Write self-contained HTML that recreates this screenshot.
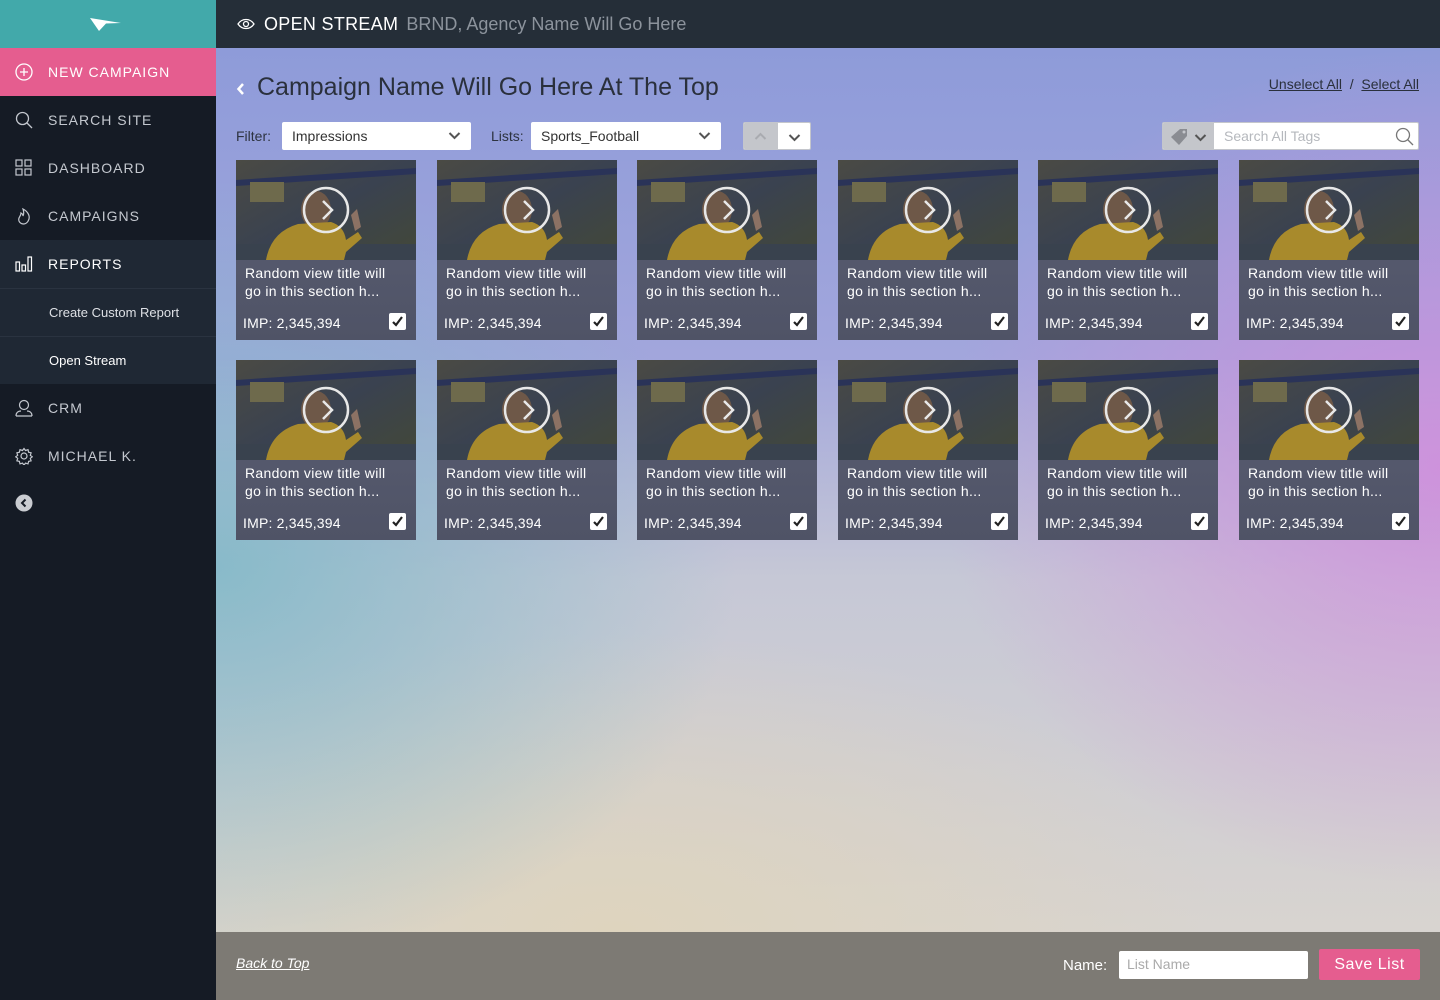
<!DOCTYPE html>
<html><head><meta charset="utf-8">
<style>
*{margin:0;padding:0;box-sizing:border-box}
body{width:1440px;height:1000px;overflow:hidden;font-family:"Liberation Sans",sans-serif;position:relative;background:#151b25}
.side{position:absolute;left:0;top:0;width:216px;height:1000px;background:#151b25}
.logo{height:48px;background:#42a9aa;position:relative}
.nav{height:48px;display:flex;align-items:center;color:#c4c8cf;font-size:14px;letter-spacing:1px;position:relative}
.nav svg{position:absolute;left:15px}
.nav span{position:absolute;left:48px}
.newc{background:#e55d8f;color:#fff}
.rep{background:#1f2834;color:#fff}
.sub{height:48px;background:#1f2834;border-top:1px solid #2a3340;color:#dde0e5;font-size:13px;padding-left:49px;display:flex;align-items:center}
.top{position:absolute;left:216px;top:0;width:1224px;height:48px;background:#252e38;color:#fff;font-size:18px;display:flex;align-items:center}
.main{position:absolute;left:216px;top:48px;width:1224px;height:884px;
background:
radial-gradient(ellipse 500px 420px at 1224px 420px,rgba(210,140,220,.85),rgba(210,140,220,0)),
radial-gradient(ellipse 520px 400px at 0px 520px,rgba(130,185,200,.9),rgba(130,185,200,0)),
radial-gradient(ellipse 600px 300px at 400px 884px,rgba(222,212,190,1),rgba(222,212,190,0)),
linear-gradient(180deg,#8e9bd9 0%,#a2a6dc 35%,#c6c8d6 60%,#d8d4d0 100%)}
.foot{position:absolute;left:216px;top:932px;width:1224px;height:68px;background:#7d7a74}
.card{position:absolute;width:180px;height:180px;background:linear-gradient(180deg,#5b5f74,#4f5366);overflow:hidden}
.card .img{position:absolute;left:0;top:0;width:180px;height:100px}
.card .t{position:absolute;left:9px;top:105px;color:#fff;font-size:14px;line-height:17.5px;letter-spacing:.3px}
.card .imp{position:absolute;left:7px;top:155px;color:#fff;font-size:14px;letter-spacing:.2px}
.card .cb{position:absolute;right:10px;top:153px;width:17px;height:17px;background:#fff;border-radius:2px}
.sel{position:absolute;height:28px;background:#fff;border-radius:2px;font-size:14px;color:#333;padding-left:10px;display:flex;align-items:center}
.lbl{position:absolute;font-size:14px;color:#2d3340}
</style></head><body>
<div class="side">
 <div class="logo"><svg style="position:absolute;left:88px;top:16px" width="34" height="16" viewBox="0 0 34 16"><path d="M2 2 L33 7 L18 7.5 L11 15 Z" fill="#fff"/></svg></div>
 <div class="nav newc"><svg width="18" height="18" viewBox="0 0 18 18"><circle cx="9" cy="9" r="8" fill="none" stroke="#fff" stroke-width="1.3"/><path d="M9 5v8M5 9h8" stroke="#fff" stroke-width="1.3"/></svg><span>NEW CAMPAIGN</span></div>
 <div class="nav"><svg width="18" height="18" viewBox="0 0 18 18"><circle cx="7.5" cy="7.5" r="6" fill="none" stroke="#c4c8cf" stroke-width="1.3"/><path d="M12 12l5 5" stroke="#c4c8cf" stroke-width="1.3"/></svg><span>SEARCH SITE</span></div>
 <div class="nav"><svg width="18" height="18" viewBox="0 0 18 18" fill="none" stroke="#c4c8cf" stroke-width="1.2"><rect x="1" y="1" width="6" height="6"/><rect x="10" y="1" width="6" height="6"/><rect x="1" y="10" width="6" height="6"/><rect x="10" y="10" width="6" height="6"/></svg><span>DASHBOARD</span></div>
 <div class="nav"><svg width="18" height="18" viewBox="0 0 18 18" fill="none" stroke="#c4c8cf" stroke-width="1.2"><path d="M9 17c-4 0-6-3-5-6 1-2 2-3 2-5 2 1 2 3 2 3 1-2 1-4 0-7 4 2 7 6 6 10-1 3-3 5-5 5z"/></svg><span>CAMPAIGNS</span></div>
 <div class="nav rep"><svg width="18" height="18" viewBox="0 0 18 18" fill="none" stroke="#fff" stroke-width="1.2"><rect x="1" y="7" width="3.5" height="9"/><rect x="7" y="10" width="3.5" height="6"/><rect x="13" y="2" width="3.5" height="14"/></svg><span>REPORTS</span></div>
 <div class="sub">Create Custom Report</div>
 <div class="sub" style="color:#fff">Open Stream</div>
 <div class="nav"><svg width="18" height="18" viewBox="0 0 18 18" fill="none" stroke="#c4c8cf" stroke-width="1.2"><circle cx="9" cy="6" r="4.5"/><path d="M1 17c0-4 3-5 5-5M17 17c0-4-3-5-5-5M1 17h16"/></svg><span>CRM</span></div>
 <div class="nav"><svg width="18" height="18" viewBox="0 0 18 18" fill="none" stroke="#c4c8cf" stroke-width="1.2"><circle cx="9" cy="9" r="3"/><path d="M9 1.5l1.5 2 2.5-.8.6 2.5 2.5.6-.8 2.5 2 1.5-2 1.5.8 2.5-2.5.6-.6 2.5-2.5-.8-1.5 2-1.5-2-2.5.8-.6-2.5-2.5-.6.8-2.5-2-1.5 2-1.5-.8-2.5 2.5-.6.6-2.5 2.5.8z"/></svg><span>MICHAEL K.</span></div>
 <svg style="position:absolute;left:15px;top:494px" width="18" height="18" viewBox="0 0 18 18"><circle cx="9" cy="9" r="8.5" fill="#c9ccd1"/><path d="M10.5 5.5 7 9l3.5 3.5" stroke="#151b25" stroke-width="2" fill="none"/></svg>
</div>
<div class="top"><svg style="margin-left:21px;margin-right:9px" width="18" height="12" viewBox="0 0 18 12" fill="none" stroke="#fff" stroke-width="1.3"><path d="M1 6c4-6 12-6 16 0-4 6-12 6-16 0z"/><circle cx="9" cy="6" r="2.5"/></svg><span style="letter-spacing:.3px">OPEN STREAM</span><span style="color:#8c939c;margin-left:8px">BRND, Agency Name Will Go Here</span></div>
<div class="main">
 <svg style="position:absolute;left:20px;top:34px" width="10" height="14" viewBox="0 0 10 14"><path d="M7 2 2.5 7 7 12" stroke="#fff" stroke-width="2.5" fill="none"/></svg>
 <div style="position:absolute;left:41px;top:25px;font-size:25px;color:#2a303c">Campaign Name Will Go Here At The Top</div>
 <div style="position:absolute;right:21px;top:28px;font-size:14px;color:#2a303c"><u>Unselect All</u> &nbsp;/&nbsp; <u>Select All</u></div>
 <div class="lbl" style="left:20px;top:80px">Filter:</div>
 <div class="sel" style="left:66px;top:74px;width:189px">Impressions<svg style="position:absolute;right:10px;top:9px" width="13" height="9" viewBox="0 0 13 9"><path d="M1.5 2l5 5 5-5" stroke="#555" stroke-width="2" fill="none"/></svg></div>
 <div class="lbl" style="left:275px;top:80px">Lists:</div>
 <div class="sel" style="left:315px;top:74px;width:190px">Sports_Football<svg style="position:absolute;right:10px;top:9px" width="13" height="9" viewBox="0 0 13 9"><path d="M1.5 2l5 5 5-5" stroke="#555" stroke-width="2" fill="none"/></svg></div>
 <div style="position:absolute;left:527px;top:74px;width:68px;height:28px;border:1px solid #c4c6cc;border-radius:2px;overflow:hidden;background:#fff">
  <div style="position:absolute;left:0;top:0;width:34px;height:28px;background:#c4c6cb"></div>
  <svg style="position:absolute;left:10px;top:9px" width="13" height="9" viewBox="0 0 13 9"><path d="M1.5 7l5-5 5 5" stroke="#a9abb0" stroke-width="2" fill="none"/></svg>
  <svg style="position:absolute;left:44px;top:10px" width="13" height="9" viewBox="0 0 13 9"><path d="M1.5 2l5 5 5-5" stroke="#555" stroke-width="2" fill="none"/></svg>
 </div>
 <div style="position:absolute;left:946px;top:74px;width:257px;height:28px;border:1px solid #c4c6cc;border-radius:2px;background:#fff;overflow:hidden">
  <div style="position:absolute;left:0;top:0;width:51px;height:28px;background:#c4c6cb"></div>
  <svg style="position:absolute;left:8px;top:5px" width="18" height="18" viewBox="0 0 18 18"><path d="M9 1h7v7l-8 9-8-8z" fill="#8a8c92"/><circle cx="13" cy="4" r="1.5" fill="#c4c6cb"/></svg>
  <svg style="position:absolute;left:31px;top:10px" width="13" height="9" viewBox="0 0 13 9"><path d="M1.5 2l5 5 5-5" stroke="#555" stroke-width="2" fill="none"/></svg>
  <span style="position:absolute;left:61px;top:5px;font-size:14px;color:#b5b8bd">Search All Tags</span>
  <svg style="position:absolute;right:4px;top:4px" width="19" height="19" viewBox="0 0 19 19" fill="none" stroke="#777" stroke-width="1.3"><circle cx="8" cy="8" r="6.5"/><path d="M12.5 12.5l5.5 5.5"/></svg>
 </div>
</div>
<div id="cards"></div>
<div class="foot">
 <div style="position:absolute;left:20px;top:23px;color:#fff;font-size:14px;font-style:italic;text-decoration:underline">Back to Top</div>
 <div style="position:absolute;left:847px;top:25px;color:#fff;font-size:15px">Name:</div>
 <div style="position:absolute;left:903px;top:19px;width:189px;height:28px;background:#fff;border-radius:2px;font-size:14px;color:#aaa;padding:5px 8px">List Name</div>
 <div style="position:absolute;left:1103px;top:17px;width:101px;height:31px;background:#e55d8f;border-radius:2px;color:#fff;font-size:16px;text-align:center;line-height:31px;letter-spacing:.5px">Save List</div>
</div>
<script>
var xs=[236,437,637,838,1038,1239],ys=[160,360],h='';
var img='<svg class="img" viewBox="0 0 180 100" width="180" height="100"><defs><linearGradient id="g" x1="0" y1="0" x2="1" y2="1"><stop offset="0" stop-color="#4a4a44"/><stop offset=".5" stop-color="#3a4250"/><stop offset="1" stop-color="#434838"/></linearGradient></defs><rect width="180" height="100" fill="url(#g)"/><path d="M0 20 L180 8 L180 14 L0 26Z" fill="#2a3358"/><rect x="14" y="22" width="34" height="20" fill="#6e6a4c"/><rect y="84" width="180" height="16" fill="#39424e"/><ellipse cx="80" cy="50" rx="15" ry="19" fill="#6e5848"/><path d="M30 100 Q35 72 62 64 L95 62 Q108 66 110 80 L122 72 L126 78 L110 92 L108 100Z" fill="#a88a2c"/><path d="M115 55 l6 -6 l4 18 l-6 4z" fill="#8c7264"/><circle cx="90" cy="50" r="22" fill="none" stroke="#e8e8e8" stroke-width="2.5"/><path d="M87 41 l9 9 l-9 9" fill="none" stroke="#e8e8e8" stroke-width="2.5"/></svg>';
ys.forEach(function(y){xs.forEach(function(x){h+='<div class="card" style="left:'+x+'px;top:'+y+'px">'+img+'<div class="t">Random view title will<br>go in this section h...</div><div class="imp">IMP: 2,345,394</div><div class="cb"><svg width="17" height="17" viewBox="0 0 17 17"><path d="M4 9l3 3 6-8" stroke="#222" stroke-width="2.2" fill="none"/></svg></div></div>';});});
document.getElementById('cards').innerHTML=h;
</script>
</body></html>
